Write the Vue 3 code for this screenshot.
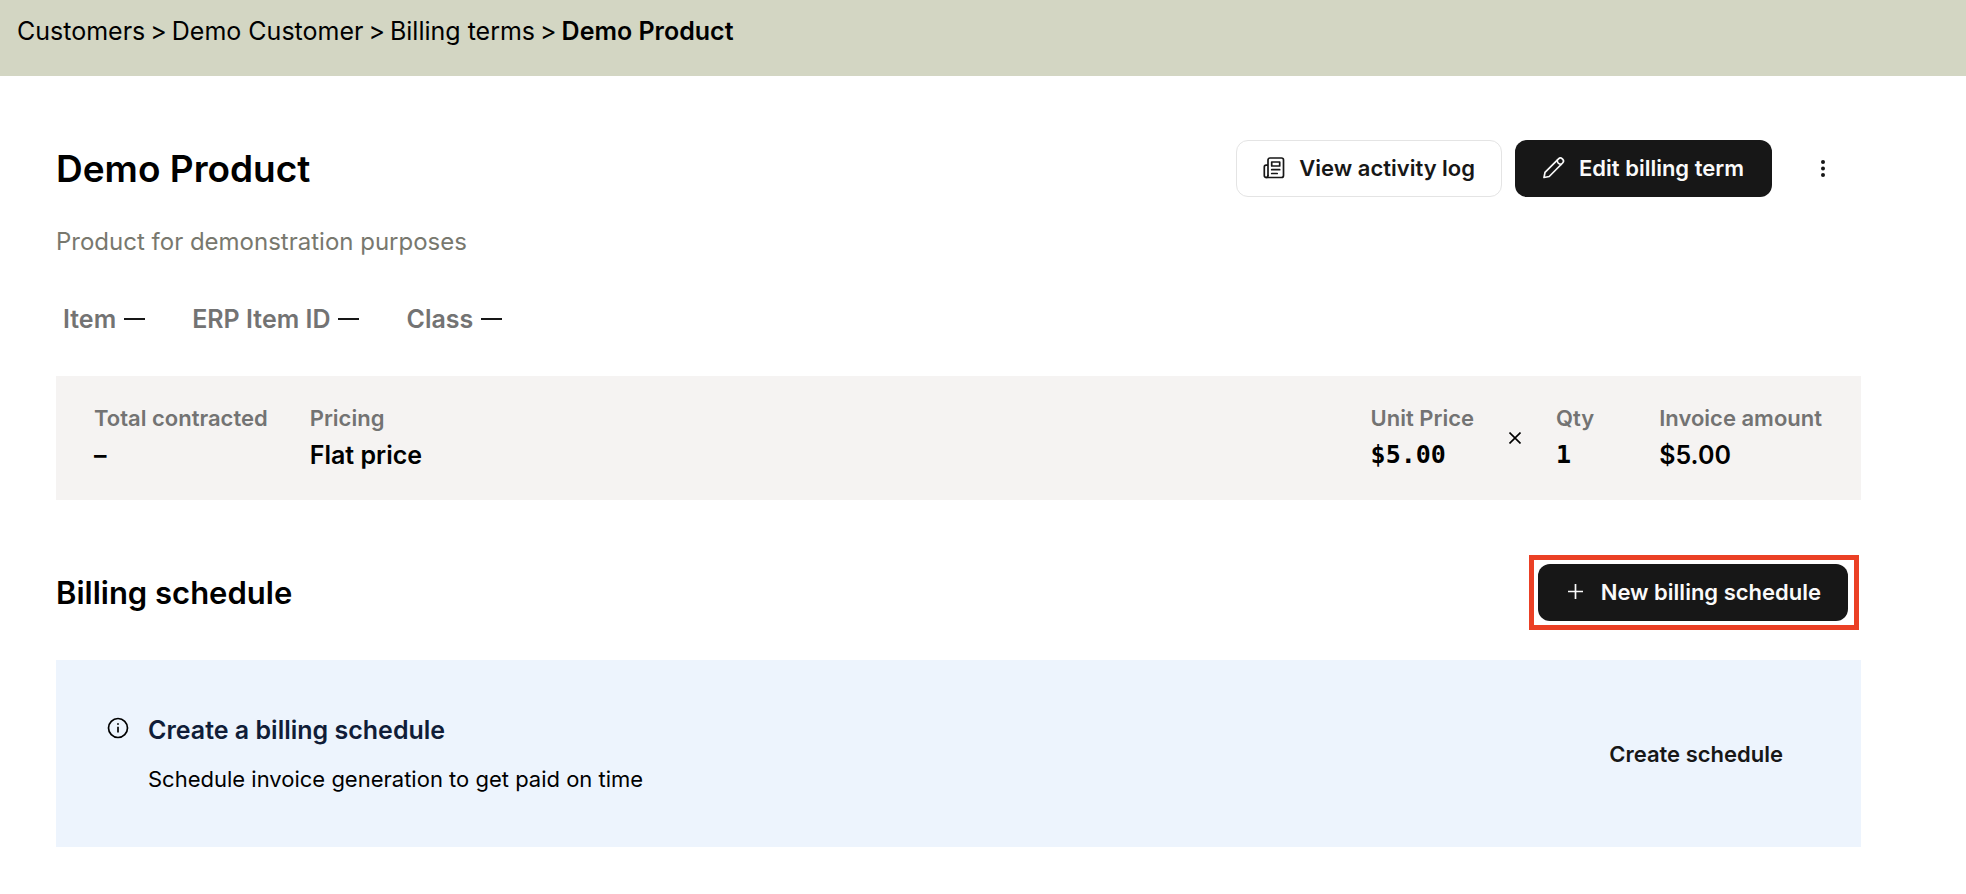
<template>
  <div class="page">
    <nav class="breadcrumb" aria-label="Breadcrumb">
      <template v-for="crumb in crumbs" :key="crumb">
        <a href="#">{{ crumb }}</a>
        <span class="separator">&gt;</span>
      </template>
      <strong>Demo Product</strong>
    </nav>

    <main class="content">
      <header class="title-row">
        <h1>Demo Product</h1>
        <div class="actions">
          <button type="button" class="btn btn-outline">
            <svg class="icon" viewBox="0 0 22 22" fill="none" stroke="currentColor" stroke-width="1.7" stroke-linejoin="round" stroke-linecap="round">
              <path d="M5 18.5V3a2 2 0 0 1 2-2h11.500a2 2 0 0 1 2 2v15.500a2 2 0 0 1-2 2H3.200a1.900 1.900 0 0 1-1.900-1.900V10a1.800 1.800 0 0 1 1.800-1.800H5"/>
              <path d="M5 18.5a1.900 1.900 0 0 1-1.900 2"/>
              <path d="M8.700 5h8v4h-8zM8.700 12.700h8M8.700 16.500h5.500"/>
            </svg>
            View activity log
          </button>
          <button type="button" class="btn btn-dark">
            <svg class="icon" viewBox="0 0 22 22" fill="none" stroke="currentColor" stroke-width="1.7" stroke-linejoin="round" stroke-linecap="round">
              <path d="M1 20.500l1-5.200L15.500 1.900a2.700 2.700 0 0 1 3.800 0l.3.300a2.700 2.700 0 0 1 0 3.800L6.200 19.500z"/>
              <path d="M14.200 3.300c.1 2.300 1.900 4 4.100 4"/>
            </svg>
            Edit billing term
          </button>
          <button type="button" class="btn-more" aria-label="More actions">
            <svg class="icon" viewBox="0 0 22 22" fill="currentColor">
              <circle cx="11" cy="4" r="2"/>
              <circle cx="11" cy="10.500" r="2"/>
              <circle cx="11" cy="17" r="2"/>
            </svg>
          </button>
        </div>
      </header>

      <p class="description">Product for demonstration purposes</p>

      <dl class="meta">
        <div v-for="label in metaLabels" :key="label" class="meta-item">
          <dt>{{ label }}</dt>
          <dd><span class="dash" role="img" aria-label="Not set"></span></dd>
        </div>
      </dl>

      <dl class="summary">
        <div class="field">
          <dt>Total contracted</dt>
          <dd>–</dd>
        </div>
        <div class="field field-pricing">
          <dt>Pricing</dt>
          <dd>Flat price</dd>
        </div>
        <div class="field">
          <dt>Unit Price</dt>
          <dd class="mono">$5.00</dd>
        </div>
        <div class="times" aria-hidden="true">
          <svg viewBox="0 0 12 12" fill="none" stroke="currentColor" stroke-width="1.600">
            <path d="M.5.5l11 11M11.500.5l-11 11"/>
          </svg>
        </div>
        <div class="field field-qty">
          <dt>Qty</dt>
          <dd class="mono">1</dd>
        </div>
        <div class="field">
          <dt>Invoice amount</dt>
          <dd>$5.00</dd>
        </div>
      </dl>

      <section>
        <div class="section-head">
          <h2>Billing schedule</h2>
          <div class="highlight">
            <button type="button" class="btn btn-dark">
              <svg class="icon" viewBox="0 0 22 22" fill="none" stroke="currentColor" stroke-width="1.700">
                <path d="M10.500 3v15M3 10.500h15"/>
              </svg>
              New billing schedule
            </button>
          </div>
        </div>

        <div class="notice">
          <svg class="notice-icon" viewBox="0 0 22 22" fill="none" stroke="currentColor" stroke-width="1.700">
            <circle cx="11" cy="11" r="9.500"/>
            <path d="M11 9.700v5.800"/>
            <circle cx="11" cy="7" r=".6" fill="currentColor" stroke-width=".8"/>
          </svg>
          <div class="notice-body">
            <h3>Create a billing schedule</h3>
            <p>Schedule invoice generation to get paid on time</p>
          </div>
          <button type="button" class="btn btn-plain">Create schedule</button>
        </div>
      </section>
    </main>
  </div>
</template>

<script setup>
const crumbs = ['Customers', 'Demo Customer', 'Billing terms']
const metaLabels = ['Item', 'ERP Item ID', 'Class']
</script>

<style>
body {
  margin: 0;
  background: #fff;
}
</style>

<style scoped>
.page {
  font-family: Inter, "Liberation Sans", sans-serif;
  font-size: 25px;
  line-height: 32px;
  color: #000;
}

h1, h2, h3, p, dl, dd {
  margin: 0;
}

h1, h2, h3, dt, dd {
  font-weight: 600;
}

.breadcrumb {
  display: flex;
  gap: 5px;
  padding: 15px 17px 29px;
  background: #d3d6c3;
}

.breadcrumb a {
  color: inherit;
  text-decoration: none;
}

.breadcrumb strong {
  font-weight: 600;
}

.content {
  padding: 64px 105px 46px 56px;
}

.title-row {
  display: flex;
  align-items: center;
  justify-content: space-between;
}

h1 {
  font-size: 37px;
  line-height: 48px;
}

.actions {
  display: flex;
  gap: 13px;
}

.btn {
  display: flex;
  align-items: center;
  gap: 14px;
  height: 57px;
  padding: 0 26px 2px;
  border: 1px solid transparent;
  border-radius: 12px;
  font: 600 22px/28px Inter, "Liberation Sans", sans-serif;
  white-space: nowrap;
  cursor: pointer;
}

.btn-outline {
  border-color: #e4e4e4;
  background: #fff;
  color: #171717;
}

.btn-dark {
  background: #171717;
  color: #fafafa;
}

.btn-plain {
  background: transparent;
  color: #171717;
}

.btn-more {
  display: flex;
  align-items: center;
  justify-content: center;
  width: 76px;
  height: 57px;
  padding: 0;
  border: 0;
  background: transparent;
  color: #171717;
  cursor: pointer;
}

.icon {
  flex: none;
  width: 22px;
  height: 22px;
}

.actions .btn-dark {
  padding-left: 27px;
  padding-right: 27px;
}

.description {
  margin-top: 29px;
  font-size: 24px;
  color: #78786e;
}

.meta {
  display: flex;
  gap: 47px;
  margin: 45px 7px 0;
}

.meta-item {
  display: flex;
  gap: 8px;
}

.meta dt {
  color: #737373;
}

.meta dd {
  display: flex;
  align-items: center;
}

.dash {
  width: 21px;
  height: 2px;
  background: #171717;
}

.summary {
  display: flex;
  margin-top: 41px;
  padding: 26px 39px 27px 38px;
  background: #f5f3f2;
}

.field dt {
  font-size: 22px;
  color: #737373;
}

.field dd {
  margin-top: 3px;
  line-height: 36px;
}

.field-pricing {
  flex: 1;
  margin-left: 42px;
}

.field-qty {
  margin-right: 65px;
}

.field .mono {
  font-family: "DejaVu Sans Mono", monospace;
  font-weight: 700;
}

.times {
  display: flex;
  align-items: center;
  margin: 0 35px;
}

.times svg {
  width: 12px;
  height: 12px;
}

.section-head {
  display: flex;
  align-items: center;
  justify-content: space-between;
  margin-top: 55px;
}

h2 {
  font-size: 31px;
  line-height: 40px;
}

.highlight {
  margin-right: 2px;
  padding: 4px 6px 4px 4px;
  border: 5px solid #eb4025;
}

.notice {
  display: flex;
  align-items: center;
  margin-top: 30px;
  padding: 54px 51px 52px;
  background: #edf4fd;
}

.notice-icon {
  align-self: flex-start;
  flex: none;
  width: 22px;
  height: 22px;
  margin: 3px 19px 0 0;
}

.notice-body {
  flex: 1;
}

h3 {
  font-size: 25px;
  line-height: 32px;
  color: #101d38;
}

.notice p {
  margin-top: 17px;
  font-size: 22px;
}
</style>
